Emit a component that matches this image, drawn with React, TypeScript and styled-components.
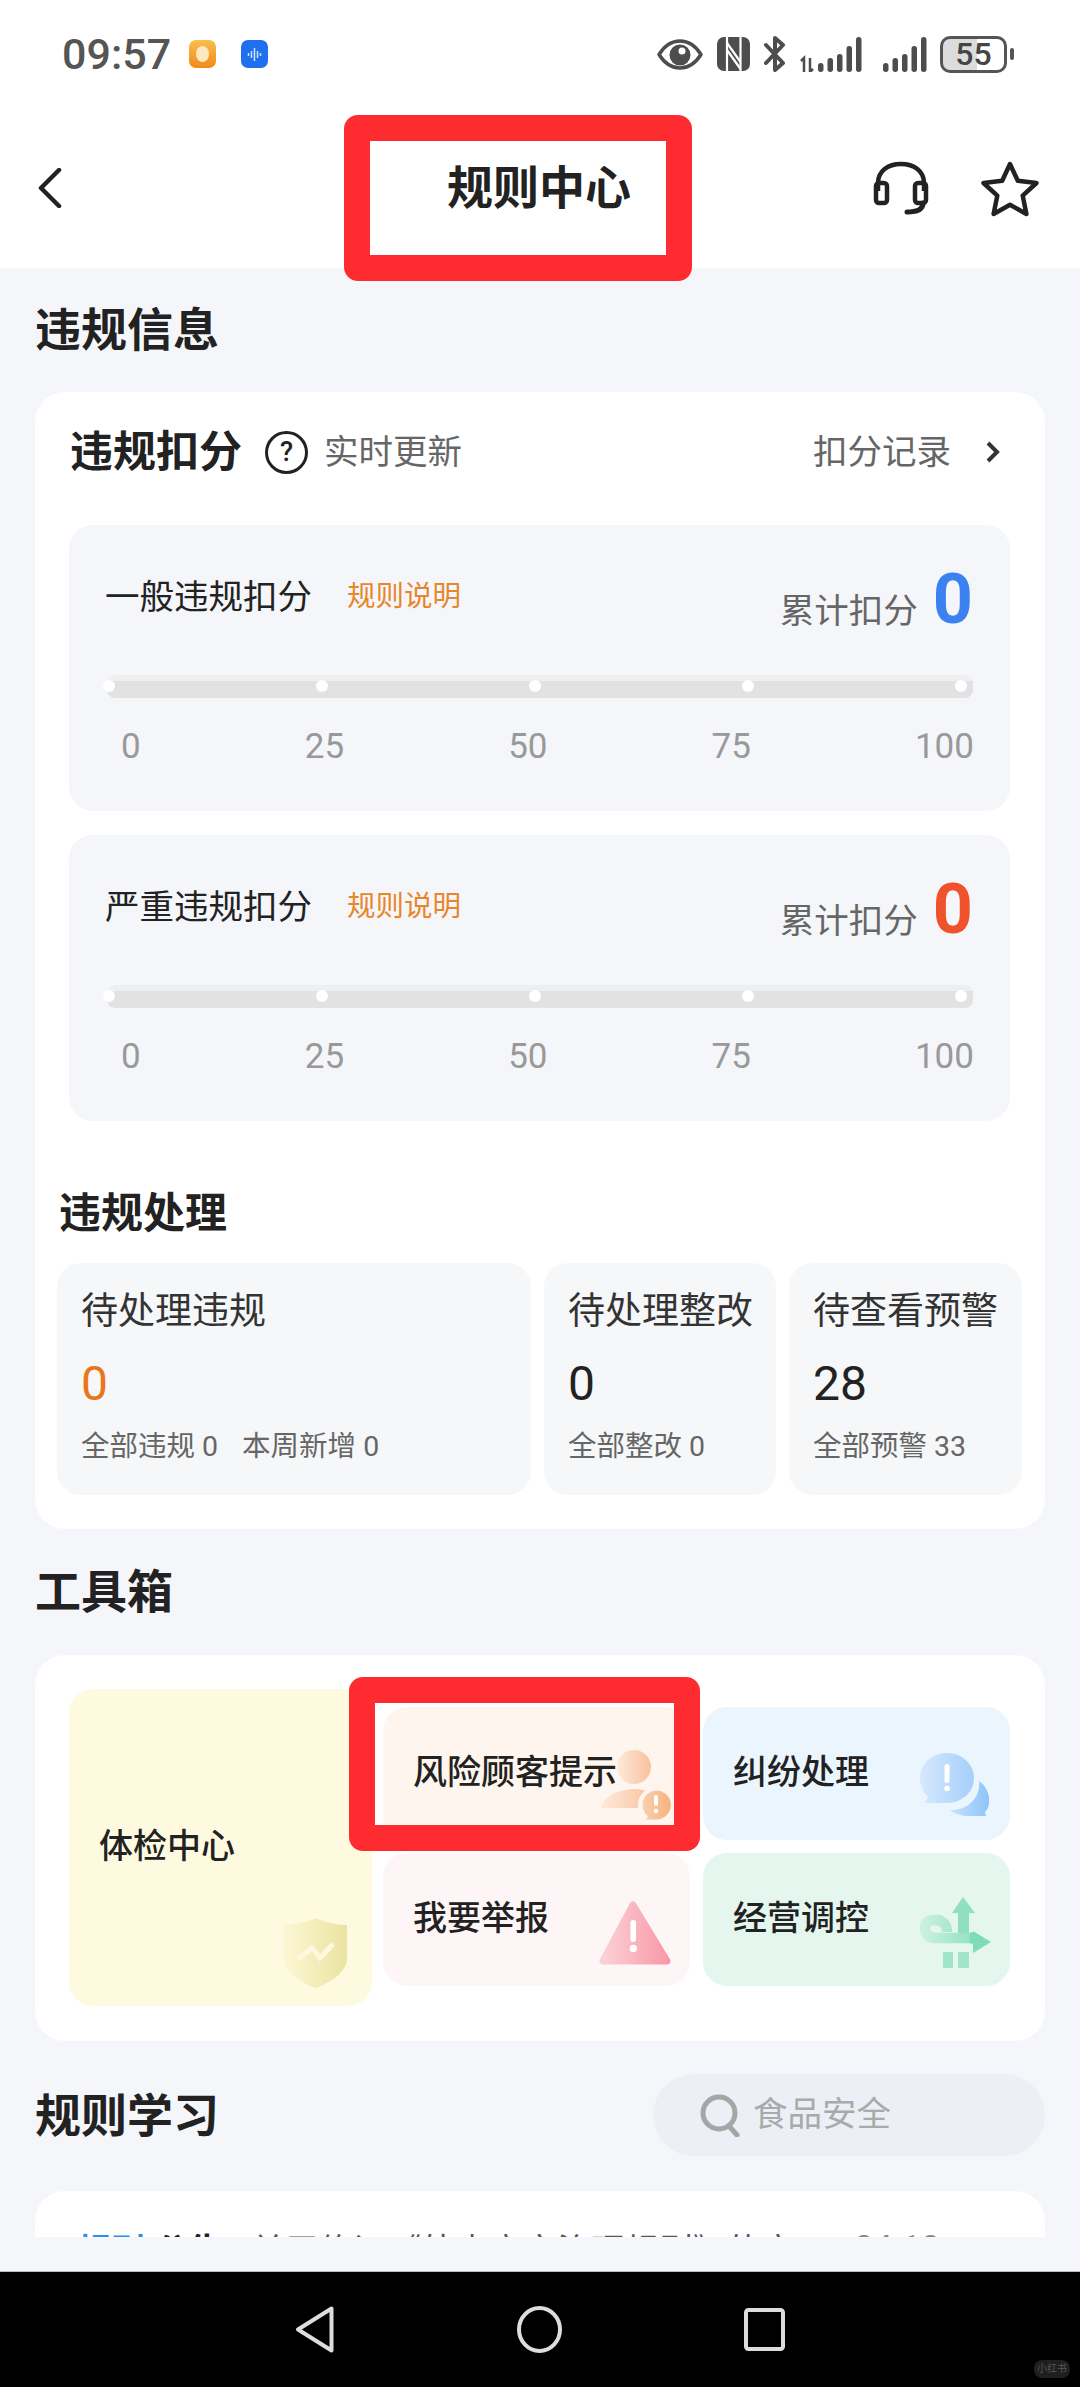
import React from "react";
import styled, { createGlobalStyle } from "styled-components";

const Global = createGlobalStyle`
  html, body { margin: 0; padding: 0; background: #f5f6fa; }
  * { box-sizing: border-box; }
  body { font-family: Roboto, "Noto Sans CJK SC", "Noto Sans", sans-serif; color: #222; }
`;

const Page = styled.div`
  position: relative;
  width: 1080px;
  height: 2387px;
  overflow: hidden;
  display: flex;
  flex-direction: column;
  background: #f5f6fa;
`;

const Header = styled.header`
  background: #fff;
  height: 268px;
  flex: none;
`;

const StatusBar = styled.div`
  height: 108px;
  padding: 0 66px 0 62px;
  display: flex;
  align-items: center;
  justify-content: space-between;
`;

const StatusLeft = styled.div`
  display: flex;
  align-items: center;
`;

const Time = styled.span`
  font-size: 43px;
  font-weight: 500;
  color: #555;
  line-height: 50px;
  margin-right: 18px;
`;

const AppDot = styled.span<{ $bg: string }>`
  width: 27px;
  height: 28px;
  border-radius: 7px;
  background: ${(p) => p.$bg};
  margin-right: 25px;
  display: flex;
  align-items: center;
  justify-content: center;
`;

const StatusRight = styled.div`
  display: flex;
  align-items: center;
  color: #4d4d4d;
`;

const StatusGap = styled.span<{ $w: number }>`
  width: ${(p) => p.$w}px;
`;

const Battery = styled.div`
  width: 67px;
  height: 37px;
  border: 3px solid #555;
  border-radius: 10px;
  background: linear-gradient(90deg, #dcdcdc 56%, #fff 56%);
  font-size: 32px;
  font-weight: 500;
  line-height: 30px;
  text-align: center;
  color: #444;
`;

const BatteryNub = styled.span`
  width: 4px;
  height: 12px;
  margin-left: 3px;
  border-radius: 2px;
  background: #555;
`;

const NavRow = styled.div`
  height: 160px;
  padding: 0 40px 0 38px;
  display: grid;
  grid-template-columns: 1fr auto 1fr;
  align-items: center;
`;

const NavTitle = styled.h1`
  margin: 0;
  font-size: 46px;
  line-height: 60px;
  font-weight: 700;
  color: #222;
`;

const NavActions = styled.div`
  display: flex;
  justify-content: flex-end;
  align-items: center;
  gap: 51px;
`;

const Main = styled.main`
  flex: 1;
  padding: 31px 35px 0;
  display: flex;
  flex-direction: column;
`;

const SectionTitle = styled.h2`
  margin: 0;
  height: 60px;
  font-size: 46px;
  line-height: 63px;
  font-weight: 700;
  color: #222;
`;

const ToolTitle = styled(SectionTitle)`
  margin-top: 32px;
`;

const Card = styled.section`
  margin-top: 33px;
  height: 1137px;
  background: #fff;
  border-radius: 30px;
  padding-top: 30px;
`;

const CardHead = styled.div`
  height: 60px;
  padding: 0 44px 0 35px;
  display: flex;
  align-items: center;
`;

const CardTitle = styled.h3`
  margin: 0;
  font-size: 43px;
  line-height: 60px;
  font-weight: 700;
`;

const HelpMark = styled.span`
  width: 43px;
  height: 43px;
  margin: 0 16px 0 23px;
  border: 3px solid #222;
  border-radius: 50%;
  display: flex;
  align-items: center;
  justify-content: center;
  font-size: 27px;
  font-weight: 500;
  line-height: 1;
`;

const Muted = styled.span`
  font-size: 34.5px;
  line-height: 44px;
  color: #666;
`;

const RecordLink = styled.div`
  margin-left: auto;
  display: flex;
  align-items: center;
  gap: 33px;
`;

const PanelStack = styled.div`
  margin-top: 43px;
  padding: 0 35px 0 34px;
  display: flex;
  flex-direction: column;
  gap: 24px;
`;

const Panel = styled.div`
  height: 286px;
  padding: 26px 35px 0 36px;
  background: #f5f6fa;
  border-radius: 24px;
`;

const PanelTop = styled.div`
  height: 84px;
  display: flex;
  justify-content: space-between;
  align-items: flex-start;
`;

const PanelTitleGroup = styled.div`
  height: 91px;
  display: flex;
  align-items: center;
  gap: 35px;
`;

const PanelTitle = styled.span`
  font-size: 34.5px;
  line-height: 44px;
  color: #222;
`;

const RuleLink = styled.span`
  font-size: 28.5px;
  line-height: 40px;
  color: #e8862a;
`;

const Total = styled.div`
  margin-top: 6px;
  display: flex;
  align-items: baseline;
  gap: 15px;
  padding-right: 2px;
`;

const TotalValue = styled.span<{ $color: string }>`
  font-size: 70px;
  line-height: 84px;
  font-weight: 700;
  color: ${(p) => p.$color};
`;

const Track = styled.div`
  margin: 40px 2px 0;
  height: 23px;
  border-radius: 8px;
  background: linear-gradient(#eeeff1 6px, #e2e2e2 6px);
  padding: 5px 6px 0 0;
`;

const TrackDots = styled.div`
  display: flex;
  justify-content: space-between;
  margin-left: -4px;
`;

const TrackDot = styled.span`
  width: 12px;
  height: 12px;
  border-radius: 50%;
  background: #fff;
`;

const Scale = styled.div`
  margin-top: 29px;
  padding: 0 1px 0 16px;
  display: flex;
  justify-content: space-between;
  font-size: 35px;
  line-height: 40px;
  color: #999;
`;

const SubTitle = styled.h3`
  margin: 67px 0 0;
  padding-left: 24px;
  height: 50px;
  font-size: 42px;
  line-height: 52px;
  font-weight: 700;
`;

const StatRow = styled.div`
  margin: 25px 23px 0 22px;
  display: grid;
  grid-template-columns: 474px 232px 233px;
  column-gap: 13px;
`;

const Stat = styled.div`
  height: 232px;
  padding: 27px 0 0 24px;
  border-radius: 24px;
  background: #f6f7f9;
`;

const StatLabel = styled.div`
  font-size: 37px;
  line-height: 44px;
  color: #333;
`;

const StatValue = styled.div<{ $color?: string }>`
  margin-top: 20px;
  font-size: 48px;
  line-height: 60px;
  color: ${(p) => p.$color ?? "#222"};
`;

const StatFoot = styled.div`
  margin-top: 13px;
  display: flex;
  gap: 24px;
  font-size: 28.5px;
  line-height: 40px;
  color: #666;
`;

const ToolCard = styled.section`
  margin-top: 34px;
  height: 386px;
  padding: 0 35px 0 34px;
  background: #fff;
  border-radius: 30px;
  display: flex;
  align-items: center;
  gap: 11px;
`;

const Tile = styled.div<{ $bg: string }>`
  position: relative;
  display: flex;
  align-items: center;
  padding-left: 30px;
  border-radius: 24px;
  background: ${(p) => p.$bg};
  font-size: 34px;
  font-weight: 500;
  line-height: 44px;
  color: #222;
`;

const BigTile = styled(Tile)`
  width: 303px;
  height: 317px;
  flex: none;
  margin-top: -1px;
`;

const TileGrid = styled.div`
  margin-top: -3px;
  display: grid;
  grid-template-columns: 307px 307px;
  grid-auto-rows: 133px;
  gap: 13px;
`;

const TileArt = styled.svg<{ $right: number; $bottom: number }>`
  position: absolute;
  right: ${(p) => p.$right}px;
  bottom: ${(p) => p.$bottom}px;
  z-index: 0;
`;

const TileText = styled.span`
  position: relative;
  z-index: 1;
  margin-bottom: 4px;
`;

const RulesHead = styled.div`
  margin-top: 33px;
  height: 82px;
  display: flex;
  justify-content: space-between;
  align-items: center;
`;

const SearchBox = styled.div`
  width: 392px;
  height: 82px;
  padding-left: 47px;
  border-radius: 41px;
  background: #eceff6;
  display: flex;
  align-items: center;
  gap: 13px;
  font-size: 34.5px;
  color: #aaa;
`;

const SearchText = styled.span`
  line-height: 44px;
  margin-bottom: 2px;
`;

const NoticeCard = styled.section`
  margin-top: 35px;
  height: 46px;
  overflow: hidden;
  padding: 38px 105px 0 42px;
  background: #fff;
  border-radius: 30px 30px 0 0;
  display: flex;
  font-size: 34px;
  line-height: 44px;
  color: #555;
  white-space: nowrap;
`;

const NoticeTag = styled.span`
  color: #2f8fe8;
  font-weight: 700;
  margin-right: 10px;
`;

const NoticeKind = styled.span`
  color: #222;
  font-weight: 700;
  margin-right: 28px;
`;

const NoticeDate = styled.span`
  margin: -4px 0 0 auto;
  color: #888;
`;

const SystemNav = styled.nav`
  position: relative;
  height: 116px;
  flex: none;
  background: #000;
  border-top: 1px solid #bbb;
  padding-left: 295px;
  display: flex;
  align-items: center;
`;

const NavGap = styled.span<{ $w: number }>`
  width: ${(p) => p.$w}px;
`;

const Watermark = styled.span`
  position: absolute;
  right: 10px;
  bottom: 9px;
  padding: 0 3px;
  height: 18px;
  border-radius: 8px;
  background: #1f1f1f;
  font-size: 10px;
  line-height: 18px;
  color: #555;
`;

const Annotation = styled.div<{ $l: number; $t: number; $w: number; $h: number }>`
  position: absolute;
  left: ${(p) => p.$l}px;
  top: ${(p) => p.$t}px;
  width: ${(p) => p.$w}px;
  height: ${(p) => p.$h}px;
  border: 26px solid #fe2c31;
  border-radius: 14px;
  z-index: 5;
`;

const BLUE = "#3b82f0";
const RED = "#f0522b";

const ScorePanel = ({ title, color }: { title: string; color: string }) => (
  <Panel>
    <PanelTop>
      <PanelTitleGroup>
        <PanelTitle>{title}</PanelTitle>
        <RuleLink>规则说明</RuleLink>
      </PanelTitleGroup>
      <Total>
        <Muted>累计扣分</Muted>
        <TotalValue $color={color}>0</TotalValue>
      </Total>
    </PanelTop>
    <Track>
      <TrackDots>
        {[0, 1, 2, 3, 4].map((i) => (
          <TrackDot key={i} />
        ))}
      </TrackDots>
    </Track>
    <Scale>
      {["0", "25", "50", "75", "100"].map((n) => (
        <span key={n}>{n}</span>
      ))}
    </Scale>
  </Panel>
);

const Eye = () => (
  <svg width="46" height="31" viewBox="0 0 46 31">
    <path d="M2 15.5C8 6 15 2 23 2s15 4 21 13.5C38 25 31 29 23 29S8 25 2 15.5Z" fill="none" stroke="#4d4d4d" strokeWidth="3.5" strokeLinejoin="round" />
    <path fillRule="evenodd" d="M23 5.5a10.5 10.5 0 1 1-10.500 10.500A10.500 10.500 0 0 1 23 5.500Zm2 3a3.500 3.500 0 1 0 0 7a3.500 3.500 0 0 0 0-7Z" fill="#4d4d4d" />
  </svg>
);

const NfcMark = () => (
  <svg width="33" height="34" viewBox="0 0 33 34">
    <rect width="33" height="34" rx="7" fill="#4d4d4d" />
    <path d="M10 0V34M23.500 0V34" stroke="#fff" strokeWidth="2.200" />
    <path d="M10 6L23.500 25M10 13L23.500 32" stroke="#fff" strokeWidth="2.200" />
  </svg>
);

const Bluetooth = () => (
  <svg width="23" height="36" viewBox="0 0 23 36">
    <path d="M3 9l17 18-8 7V2l8 7L3 27" fill="none" stroke="#4d4d4d" strokeWidth="4" strokeLinejoin="round" strokeLinecap="round" />
  </svg>
);

const SIGNAL_HEIGHTS = [9, 14, 18, 26, 35];

const Signal = () => (
  <svg width="44" height="36" viewBox="0 0 44 36">
    {SIGNAL_HEIGHTS.map((h, i) => (
      <rect key={i} x={i * 9.5} y={36 - h} width="5.500" height={h} rx="2.700" fill="#4d4d4d" />
    ))}
  </svg>
);

const SignalWithData = () => (
  <svg width="62" height="36" viewBox="0 0 62 36">
    <path d="M1 25l3-3V36M10 22V36L13 33" stroke="#4d4d4d" strokeWidth="2.500" fill="none" />
    {SIGNAL_HEIGHTS.map((h, i) => (
      <rect key={i} x={18 + i * 9.5} y={36 - h} width="5.500" height={h} rx="2.700" fill="#4d4d4d" />
    ))}
  </svg>
);

const BackArrow = () => (
  <svg width="24" height="40" viewBox="0 0 24 40">
    <path d="M21 2L3 20l18 18" fill="none" stroke="#222" strokeWidth="4.500" strokeLinecap="round" strokeLinejoin="round" />
  </svg>
);

const Headset = () => (
  <svg width="56" height="54" viewBox="0 0 56 54">
    <path d="M5 30V22C5 10 15 3 28 3s23 7 23 19v8" fill="none" stroke="#222" strokeWidth="4.500" />
    <rect x="3" y="22" width="11" height="20" rx="3" fill="none" stroke="#222" strokeWidth="4.500" />
    <rect x="42" y="22" width="11" height="20" rx="3" fill="none" stroke="#222" strokeWidth="4.500" />
    <path d="M50 42c0 6-6 9-16 9" fill="none" stroke="#222" strokeWidth="5" strokeLinecap="round" />
  </svg>
);

const Star = () => (
  <svg width="60" height="57" viewBox="0 0 60 57">
    <path d="M30 4l7.800 16.800 18.700 2.200-13.800 12.600 3.700 18.400L30 44.800 13.600 54l3.700-18.400L3.500 23l18.700-2.200Z" fill="none" stroke="#222" strokeWidth="4.500" strokeLinejoin="round" />
  </svg>
);

const RightChevron = () => (
  <svg width="17" height="22" viewBox="0 0 17 22">
    <path d="M4 2l9 9-9 9" fill="none" stroke="#333" strokeWidth="4" />
  </svg>
);

const Magnifier = () => (
  <svg width="40" height="43" viewBox="0 0 40 43">
    <circle cx="19" cy="19" r="16" fill="none" stroke="#a6a6a6" strokeWidth="5" />
    <path d="M29 32l8 9" stroke="#a6a6a6" strokeWidth="5" strokeLinecap="round" />
  </svg>
);

const ShieldArt = () => (
  <TileArt $right={25} $bottom={18} width="63" height="70" viewBox="0 0 63 70">
    <defs>
      <linearGradient id="sh" x1="0" x2="1" y1="0" y2="0">
        <stop offset="0" stopColor="#fcf7d4" />
        <stop offset="1" stopColor="#ebe3a2" />
      </linearGradient>
    </defs>
    <path d="M31.500 0C40 4 52 7 63 7V40C63 55 45 65 31.500 70C18 65 0 55 0 40V7C11 7 23 4 31.500 0Z" fill="url(#sh)" />
    <path d="M14 41l14-11 8 10 13-14" fill="none" stroke="#fdf9dc" strokeWidth="5" />
  </TileArt>
);

const PersonArt = () => (
  <TileArt $right={10} $bottom={10} width="90" height="90" viewBox="0 0 90 90">
    <defs>
      <linearGradient id="pe" x1="0" x2="1" y1="0" y2="0">
        <stop offset="0" stopColor="#fdeadd" />
        <stop offset="1" stopColor="#f9c199" />
      </linearGradient>
      <linearGradient id="pb" x1="0" x2="1" y1="0" y2="0">
        <stop offset="0" stopColor="#fbcfae" />
        <stop offset="1" stopColor="#f8b27f" />
      </linearGradient>
    </defs>
    <circle cx="44" cy="27" r="17" fill="url(#pe)" />
    <path d="M11 68C13 57 26 50 44 49C52 49 60 51 64 56V68Z" fill="url(#pe)" />
    <circle cx="66" cy="65" r="18" fill="#fef5ef" />
    <path d="M66 50.500a14.500 14.500 0 0 1 2 28.900H56l2-3A14.500 14.500 0 0 1 66 50.500Z" fill="url(#pb)" />
    <rect x="64" y="55" width="4" height="11" rx="2" fill="#fff" />
    <circle cx="66" cy="71" r="2.300" fill="#fff" />
  </TileArt>
);

const ChatArt = () => (
  <TileArt $right={10} $bottom={10} width="90" height="85" viewBox="0 0 90 85">
    <defs>
      <linearGradient id="c1" x1="0" x2="1" y1="0" y2="0">
        <stop offset="0" stopColor="#d6e9fe" />
        <stop offset="1" stopColor="#a5cffb" />
      </linearGradient>
      <linearGradient id="c2" x1="0" x2="1" y1="0" y2="0">
        <stop offset="0" stopColor="#c8e2fd" />
        <stop offset="1" stopColor="#8ec4fa" />
      </linearGradient>
    </defs>
    <path d="M37 8C52 8 64 19 64 33S52 58 37 58H15L18 52C13 47 10 40 10 33C10 19 22 8 37 8Z" fill="url(#c1)" />
    <rect x="34.500" y="19" width="5" height="19" rx="2.500" fill="#fff" />
    <circle cx="37" cy="43.500" r="2.800" fill="#fff" />
    <path d="M69 36C77 42 80 50 79 58C79 62 77 65 75 67L76 71H60C52 71 45 69 40 65C56 66 71 54 69 36Z" fill="url(#c2)" />
  </TileArt>
);

const AlertArt = () => (
  <TileArt $right={10} $bottom={11} width="90" height="80" viewBox="0 0 90 80">
    <defs>
      <linearGradient id="al" x1="0" x2="1" y1="0" y2="0">
        <stop offset="0" stopColor="#fcd0d6" />
        <stop offset="1" stopColor="#f79aa8" />
      </linearGradient>
    </defs>
    <path d="M43 10L13 66H77Z" fill="url(#al)" stroke="url(#al)" strokeWidth="7" strokeLinejoin="round" />
    <rect x="40.500" y="25" width="5.500" height="22" rx="2.700" fill="#fff" />
    <circle cx="43.300" cy="53.500" r="3.700" fill="#fff" />
  </TileArt>
);

const RouteArt = () => (
  <TileArt $right={10} $bottom={11} width="90" height="85" viewBox="0 0 90 85">
    <defs>
      <linearGradient id="r1" gradientUnits="userSpaceOnUse" x1="10" x2="81" y1="0" y2="0">
        <stop offset="0" stopColor="#cdf1e3" />
        <stop offset="1" stopColor="#7fdcb8" />
      </linearGradient>
    </defs>
    <path d="M53 7L65 23H59V44H48V23H42Z" fill="#8fe0c1" />
    <rect x="33" y="62" width="10" height="16" fill="#a0e5cb" />
    <rect x="48" y="62" width="11" height="16" fill="#a0e5cb" />
    <path d="M64 48H26C18 48 15 43 15 38C15 31 20 30 26 30C33 30 37 35 37 42" fill="none" stroke="url(#r1)" strokeWidth="10.500" />
    <path d="M63 41L81 52L63 63V53.500H60V42.500H63Z" fill="#7fdcb8" />
  </TileArt>
);

const NavBack = () => (
  <svg width="39" height="47" viewBox="0 0 39 47">
    <path d="M36.500 3L3 24l33.500 21Z" transform="translate(0 -0.500)" fill="none" stroke="#ddd" strokeWidth="4" strokeLinejoin="round" />
  </svg>
);

const NavHome = () => (
  <svg width="45" height="47" viewBox="0 0 45 47">
    <ellipse cx="22.500" cy="23.500" rx="20.500" ry="21.500" fill="none" stroke="#ddd" strokeWidth="4" />
  </svg>
);

const NavRecent = () => (
  <svg width="41" height="43" viewBox="0 0 41 43">
    <rect x="2" y="2" width="37" height="39" rx="2.500" fill="none" stroke="#ddd" strokeWidth="4" />
  </svg>
);

export default function App() {
  return (
    <Page>
      <Global />
      <Header>
        <StatusBar>
          <StatusLeft>
            <Time>09:57</Time>
            <AppDot $bg="linear-gradient(#f9bd4f,#f08a1d)">
              <svg width="13" height="16" viewBox="0 0 13 16"><ellipse cx="6.500" cy="8" rx="6.500" ry="8" fill="#fde9bd" /></svg>
            </AppDot>
            <AppDot $bg="#1f6fee">
              <svg width="15" height="15" viewBox="0 0 15 15"><path d="M1.500 6v3M4.500 4v7M7.500 1v13M10.500 4v7M13.500 6v3" stroke="#cfe2ff" strokeWidth="1.500" /></svg>
            </AppDot>
          </StatusLeft>
          <StatusRight>
            <Eye />
            <StatusGap $w={14} />
            <NfcMark />
            <StatusGap $w={13} />
            <Bluetooth />
            <StatusGap $w={14} />
            <SignalWithData />
            <StatusGap $w={21} />
            <Signal />
            <StatusGap $w={13} />
            <Battery>55</Battery>
            <BatteryNub />
          </StatusRight>
        </StatusBar>
        <NavRow>
          <BackArrow />
          <NavTitle>规则中心</NavTitle>
          <NavActions>
            <Headset />
            <Star />
          </NavActions>
        </NavRow>
      </Header>
      <Main>
        <SectionTitle>违规信息</SectionTitle>
        <Card>
          <CardHead>
            <CardTitle>违规扣分</CardTitle>
            <HelpMark>?</HelpMark>
            <Muted>实时更新</Muted>
            <RecordLink>
              <Muted>扣分记录</Muted>
              <RightChevron />
            </RecordLink>
          </CardHead>
          <PanelStack>
            <ScorePanel title="一般违规扣分" color={BLUE} />
            <ScorePanel title="严重违规扣分" color={RED} />
          </PanelStack>
          <SubTitle>违规处理</SubTitle>
          <StatRow>
            <Stat>
              <StatLabel>待处理违规</StatLabel>
              <StatValue $color="#e8761a">0</StatValue>
              <StatFoot>
                <span>全部违规 0</span>
                <span>本周新增 0</span>
              </StatFoot>
            </Stat>
            <Stat>
              <StatLabel>待处理整改</StatLabel>
              <StatValue>0</StatValue>
              <StatFoot>
                <span>全部整改 0</span>
              </StatFoot>
            </Stat>
            <Stat>
              <StatLabel>待查看预警</StatLabel>
              <StatValue>28</StatValue>
              <StatFoot>
                <span>全部预警 33</span>
              </StatFoot>
            </Stat>
          </StatRow>
        </Card>
        <ToolTitle>工具箱</ToolTitle>
        <ToolCard>
          <BigTile $bg="#fefae0">
            <TileText>体检中心</TileText>
            <ShieldArt />
          </BigTile>
          <TileGrid>
            <Tile $bg="#fef5ef">
              <TileText>风险顾客提示</TileText>
              <PersonArt />
            </Tile>
            <Tile $bg="#ebf5fe">
              <TileText>纠纷处理</TileText>
              <ChatArt />
            </Tile>
            <Tile $bg="#fef5f6">
              <TileText>我要举报</TileText>
              <AlertArt />
            </Tile>
            <Tile $bg="#e5f6ef">
              <TileText>经营调控</TileText>
              <RouteArt />
            </Tile>
          </TileGrid>
        </ToolCard>
        <RulesHead>
          <SectionTitle>规则学习</SectionTitle>
          <SearchBox>
            <Magnifier />
            <SearchText>食品安全</SearchText>
          </SearchBox>
        </RulesHead>
        <NoticeCard>
          <NoticeTag>规则</NoticeTag>
          <NoticeKind>公告</NoticeKind>
          <span>关于修订《外卖商家治理规则》的意</span>
          <NoticeDate>04-10</NoticeDate>
        </NoticeCard>
      </Main>
      <SystemNav>
        <NavBack />
        <NavGap $w={183} />
        <NavHome />
        <NavGap $w={182} />
        <NavRecent />
        <Watermark>小红书</Watermark>
      </SystemNav>
      <Annotation $l={344} $t={115} $w={348} $h={166} />
      <Annotation $l={349} $t={1677} $w={351} $h={174} />
    </Page>
  );
}
